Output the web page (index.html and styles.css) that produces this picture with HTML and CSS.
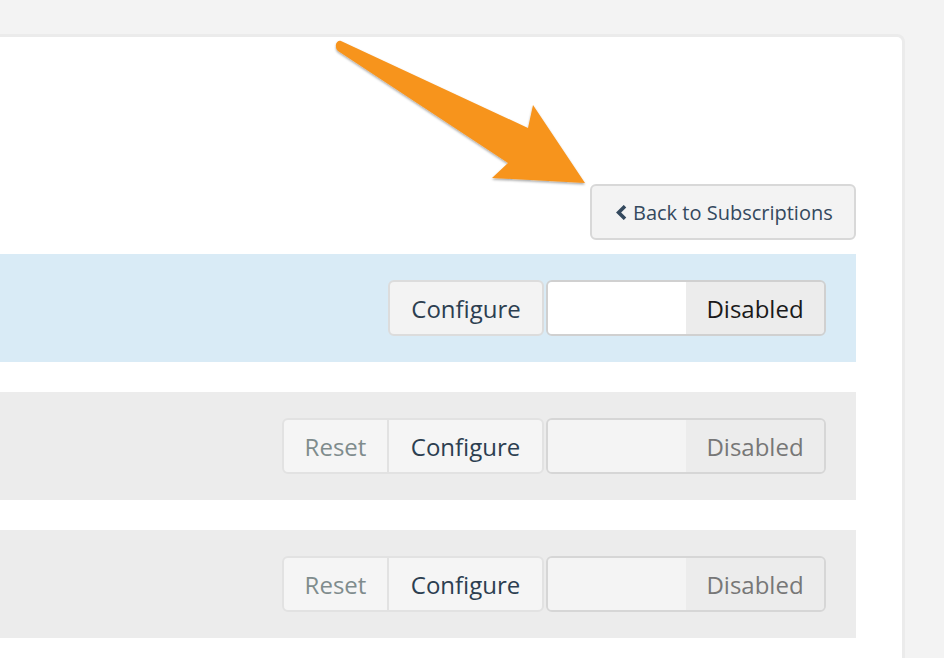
FILE: index.html
```html
<!DOCTYPE html>
<html>
<head>
<meta charset="utf-8">
<link rel="stylesheet" href="styles.css">
</head>
<body>
<div class="page">
  <div class="panel">
    <div class="header">
      <button class="back">
        <svg class="chev" width="12" height="15" viewBox="0 0 12 15"><path d="M10 1.2 L3.6 7.5 L10 13.8" fill="none" stroke="#34495e" stroke-width="3.6" stroke-linejoin="miter"/></svg>
        <span>Back to Subscriptions</span>
      </button>
    </div>
    <div class="row row-active">
      <div class="group">
        <button class="btn btn-config">Configure</button>
      </div>
      <div class="toggle">
        <span class="t-off"></span>
        <span class="t-label">Disabled</span>
      </div>
    </div>
    <div class="row row-muted">
      <div class="group group-joined">
        <button class="btn btn-reset">Reset</button>
        <button class="btn btn-config">Configure</button>
      </div>
      <div class="toggle toggle-muted">
        <span class="t-off"></span>
        <span class="t-label">Disabled</span>
      </div>
    </div>
    <div class="row row-muted">
      <div class="group group-joined">
        <button class="btn btn-reset">Reset</button>
        <button class="btn btn-config">Configure</button>
      </div>
      <div class="toggle toggle-muted">
        <span class="t-off"></span>
        <span class="t-label">Disabled</span>
      </div>
    </div>
  </div>
  <svg class="arrow" width="300" height="170" viewBox="0 0 300 170">
    <defs>
      <filter id="sh" x="-10%" y="-10%" width="130%" height="130%">
        <feDropShadow dx="0" dy="1.5" stdDeviation="1.2" flood-color="#000" flood-opacity="0.35"/>
      </filter>
    </defs>
    <path filter="url(#sh)" fill="#f7941e" d="M41 11 C 39 10, 35 12, 36 17 C 36 19, 37 20, 38 21 L 208 133 L 192 148 L 285 153 L 233 75 L 228 98 Z"/>
  </svg>
</div>
</body>
</html>
```
FILE: styles.css
```css
html, body {
  margin: 0;
  padding: 0;
  background: #f3f3f3;
  overflow: hidden;
  font-family: "Open Sans", "Liberation Sans", sans-serif;
}
.page {
  position: relative;
  width: 944px;
  height: 658px;
  padding-top: 34px;
  box-sizing: border-box;
}
.panel {
  box-sizing: border-box;
  width: 905px;
  min-height: 700px;
  background: #ffffff;
  border: 3px solid #ebebeb;
  border-left: 0;
  border-top-right-radius: 8px;
  padding: 147px 46px 0 0;
}
.header {
  display: flex;
  justify-content: flex-end;
  margin-bottom: 14px;
}
.back {
  box-sizing: border-box;
  height: 56px;
  width: 266px;
  display: flex;
  align-items: center;
  justify-content: flex-start;
  gap: 6px;
  background: #f3f3f3;
  border: 2px solid #d8d8d8;
  border-radius: 6px;
  font-family: inherit;
  font-size: 20px;
  color: #34495e;
  padding: 0 0 0 23px;
}
.chev { display: block; }
.row {
  height: 108px;
  display: flex;
  align-items: center;
  justify-content: flex-end;
  padding-right: 30px;
  margin-bottom: 30px;
}
.row-active { background: #d9ebf6; }
.row-muted { background: #ececec; }
.group {
  display: flex;
}
.btn {
  box-sizing: border-box;
  height: 56px;
  font-family: inherit;
  font-size: 24px;
  background: #f3f3f3;
  border: 2px solid #dcdcdc;
  border-radius: 6px;
  padding: 0;
  color: #2c3e50;
}
.btn-config { width: 156px; }
.btn-reset { width: 106px; color: #7f8c8d; }
.group-joined .btn {
  background: #f5f5f5;
  border-color: #e2e2e2;
}
.group-joined .btn-reset {
  border-top-right-radius: 0;
  border-bottom-right-radius: 0;
  border-right-width: 1px;
}
.group-joined .btn-config {
  border-top-left-radius: 0;
  border-bottom-left-radius: 0;
  border-left-width: 1px;
}
.toggle {
  box-sizing: border-box;
  width: 280px;
  height: 56px;
  display: flex;
  border: 2px solid #d0d0d0;
  border-radius: 6px;
  overflow: hidden;
  margin-left: 2px;
}
.t-off {
  flex: 1;
  background: #ffffff;
}
.t-label {
  flex: 1;
  background: #ececec;
  display: flex;
  align-items: center;
  justify-content: center;
  font-size: 24px;
  color: #1a1a1a;
}
.toggle-muted { border-color: #d6d6d6; }
.toggle-muted .t-off { background: #f4f4f4; }
.toggle-muted .t-label { background: #ececec; color: #777777; }
.arrow {
  position: absolute;
  left: 300px;
  top: 30px;
}
```
